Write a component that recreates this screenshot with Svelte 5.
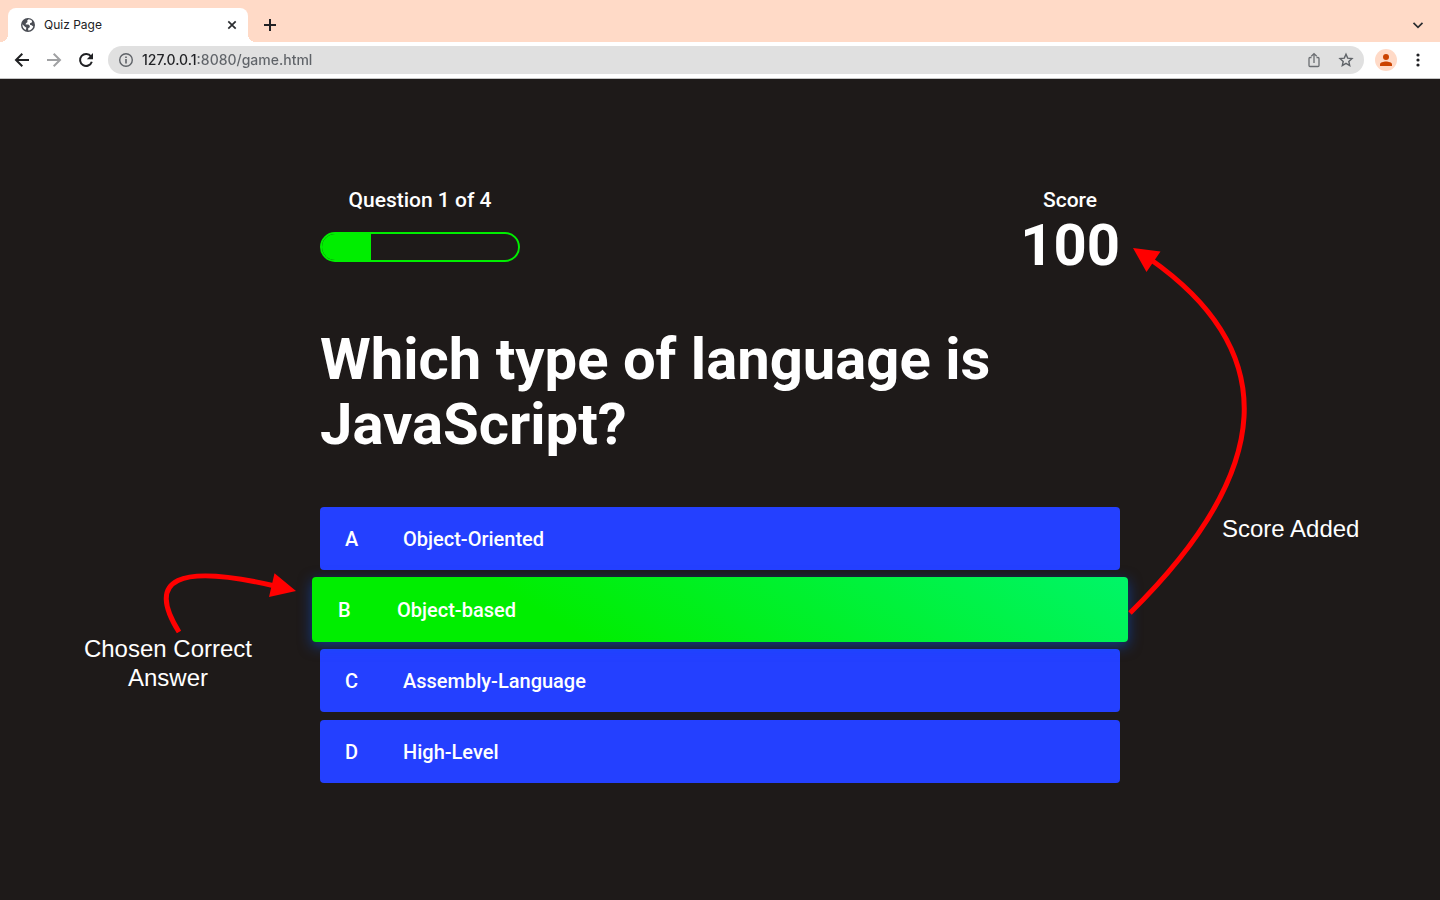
<script>
  const choices = [
    { letter: 'A', text: 'Object-Oriented' },
    { letter: 'B', text: 'Object-based' },
    { letter: 'C', text: 'Assembly-Language' },
    { letter: 'D', text: 'High-Level' }
  ];
  const question = 1;
  const total = 4;
  let chosen = $state('B');
  let address = $state('127.0.0.1:8080/game.html');
</script>

<div class="window">
  <header>
    <div class="tabs">
      <div class="tab">
        <svg class="globe" width="16" height="16" viewBox="0 0 16 16" aria-hidden="true">
          <circle cx="8" cy="8" r="7" fill="#4b4e55" />
          <path d="M8.600 2.200 7.200 3.600 7.500 5 5.800 6.400 5.600 7.400H8.400L9.800 8.800V10.200L8.200 11.200V13.600C10.800 13.400 12.700 11.600 13.300 9.400L11.600 8.200 10 7.800V6.200L11.800 5.500 12.100 4C11.200 3 10 2.300 8.600 2.200ZM2.400 7.200C2.200 9.600 3.600 12 5.700 13L6.400 10.800 5 9.800Z" fill="#fff" />
        </svg>
        <span class="title">Quiz Page</span>
        <button class="icon" aria-label="Close tab">
          <svg width="16" height="16" viewBox="0 0 16 16"><path d="M4.300 4.300 11.700 11.700M11.700 4.300 4.300 11.700" stroke="#2b2d30" stroke-width="1.700" /></svg>
        </button>
      </div>
      <button class="icon add" aria-label="New tab">
        <svg width="16" height="16" viewBox="0 0 16 16"><path d="M8 2V14M2 8H14" stroke="#202124" stroke-width="2" /></svg>
      </button>
      <button class="icon search" aria-label="Search tabs">
        <svg width="16" height="16" viewBox="0 0 16 16"><path d="M3.500 5.800 8 10.300 12.500 5.800" fill="none" stroke="#2b2d30" stroke-width="1.700" /></svg>
      </button>
    </div>
    <nav class="toolbar" aria-label="Browser">
      <button class="icon" aria-label="Back">
        <svg width="16" height="16" viewBox="0 0 16 16"><path d="M15 8H2.500M8.300 1.700 2 8 8.300 14.300" fill="none" stroke="#202124" stroke-width="2" /></svg>
      </button>
      <button class="icon" aria-label="Forward">
        <svg width="16" height="16" viewBox="0 0 16 16"><path d="M1 8H13.500M7.700 1.700 14 8 7.700 14.300" fill="none" stroke="#a0a1a3" stroke-width="2" /></svg>
      </button>
      <button class="icon" aria-label="Reload">
        <svg width="16" height="16" viewBox="0 0 16 16"><path d="M13 4.500A6 6 0 1 0 13.800 9.700" fill="none" stroke="#202124" stroke-width="2" /><path d="M15 1V7.200H8.800Z" fill="#202124" /></svg>
      </button>
      <div class="address">
        <svg width="16" height="16" viewBox="0 0 16 16" aria-hidden="true"><circle cx="8" cy="8" r="6.300" fill="none" stroke="#5f6368" stroke-width="1.400" /><path d="M8 7V11.500M8 4.400V6" stroke="#5f6368" stroke-width="1.600" /></svg>
        <input type="text" aria-label="Address" bind:value={address} />
        <button class="icon" aria-label="Share">
          <svg width="16" height="16" viewBox="0 0 16 16"><path d="M5.500 5.500H4Q3 5.500 3 6.500V13.500Q3 14.500 4 14.500H12Q13 14.500 13 13.500V6.500Q13 5.500 12 5.500H10.500M8 11V2M5.300 4.300 8 1.600 10.700 4.300" fill="none" stroke="#6b6e72" stroke-width="1.300" /></svg>
        </button>
        <button class="icon" aria-label="Bookmark">
          <svg width="16" height="16" viewBox="0 0 16 16"><path d="M8 2.200 9.700 6.100 14 6.500 10.800 9.400 11.700 13.600 8 11.400 4.300 13.600 5.200 9.400 2 6.500 6.300 6.100Z" fill="none" stroke="#5f6368" stroke-width="1.400" /></svg>
        </button>
      </div>
      <button class="profile" aria-label="Profile">
        <svg width="22" height="22" viewBox="0 0 22 22"><circle cx="11" cy="8" r="3" fill="#cb4300" /><path d="M5 17V15.200C5 13.300 8.500 12.400 11 12.400S17 13.300 17 15.200V17Z" fill="#cb4300" /></svg>
      </button>
      <button class="icon" aria-label="Menu">
        <svg width="16" height="16" viewBox="0 0 16 16" fill="#202124"><circle cx="8" cy="3" r="1.600" /><circle cx="8" cy="8" r="1.600" /><circle cx="8" cy="13" r="1.600" /></svg>
      </button>
    </nav>
  </header>

  <main>
    <div class="quiz">
      <div class="hud">
        <div class="item">
          <p>Question {question} of {total}</p>
          <div class="progress" role="progressbar" aria-label="Progress" aria-valuemin="0" aria-valuemax={total} aria-valuenow={question}>
            <div class="fill" style:width="{(question / total) * 100}%"></div>
          </div>
        </div>
        <div class="item">
          <p>Score</p>
          <strong>100</strong>
        </div>
      </div>
      <h1>Which type of language is JavaScript?</h1>
      <div class="choices">
        {#each choices as choice}
          <button class="choice" class:correct={chosen === choice.letter} onclick={() => (chosen = choice.letter)}>
            <span>{choice.letter}</span>
            <span>{choice.text}</span>
          </button>
        {/each}
      </div>

      <svg class="arrows" width="1440" height="603" viewBox="0 188 1440 603" aria-hidden="true">
        <g fill="none" stroke="#f00" stroke-width="5">
          <path d="M179 632Q129 552 275 586" />
          <path d="M1130 613Q1348 398 1150 259" />
        </g>
        <path d="M296 591 274.500 573.300 269 597ZM1133 248 1160.500 251.500 1146.500 272Z" fill="#f00" />
      </svg>
      <p class="note chosen">Chosen Correct<br />Answer</p>
      <p class="note added">Score Added</p>
    </div>
  </main>
</div>

<style>
  :global(body) {
    margin: 0;
    background: #1e1a19;
  }
  .window {
    min-height: 100vh;
    display: flex;
    flex-direction: column;
    overflow: hidden;
    font-family: Roboto, "Liberation Sans", sans-serif;
  }
  p,
  h1 {
    margin: 0;
  }
  button {
    border: 0;
    padding: 0;
    font: inherit;
    cursor: pointer;
  }
  svg {
    display: block;
  }
  .icon {
    display: flex;
    background: none;
  }
  .tabs {
    display: flex;
    align-items: center;
    height: 42px;
    padding: 0 14px 0 8px;
    background: #ffdac7;
  }
  .tab {
    position: relative;
    box-sizing: border-box;
    display: flex;
    align-items: center;
    gap: 8px;
    align-self: flex-end;
    width: 240px;
    height: 34px;
    padding: 0 8px 0 12px;
    border-radius: 8px 8px 0 0;
    background: #fff;
  }
  .tab::before,
  .tab::after {
    content: "";
    position: absolute;
    bottom: 0;
    width: 8px;
    height: 8px;
  }
  .tab::before {
    right: 100%;
    background: radial-gradient(circle at 0 0, transparent 8px, #fff 8px);
  }
  .tab::after {
    left: 100%;
    background: radial-gradient(circle at 100% 0, transparent 8px, #fff 8px);
  }
  .title {
    flex: 1;
    font: 12px/16px Inter, sans-serif;
    color: #202124;
  }
  .add {
    margin: 8px 0 0 14px;
  }
  .search {
    margin: 8px 0 0 auto;
  }
  .toolbar {
    display: flex;
    align-items: center;
    gap: 16px;
    height: 36px;
    padding: 0 14px;
    background: #fff;
    border-bottom: 1px solid #c4c4c4;
  }
  .address {
    flex: 1;
    display: flex;
    align-items: center;
    gap: 16px;
    height: 28px;
    margin: 0 -4px 0 -2px;
    padding: 0 10px;
    border-radius: 14px;
    background: #e0e0e0;
  }
  input {
    flex: 1;
    min-width: 0;
    margin-left: -8px;
    padding: 0;
    border: 0;
    outline: 0;
    font: 500 14px/20px Inter, sans-serif;
    color: transparent;
    caret-color: #202124;
    background: linear-gradient(to right, #202124 55px, #5f6368 55px);
    -webkit-background-clip: text;
    background-clip: text;
  }
  .profile {
    width: 22px;
    height: 22px;
    margin: 0 -3px 0 -1px;
    border-radius: 50%;
    background: #ffdac7;
  }
  main {
    flex: 1;
    display: flex;
    align-items: center;
    justify-content: center;
    color: #fff;
  }
  .quiz {
    position: relative;
    width: 800px;
    max-width: 100%;
    padding-bottom: 8px;
  }
  .hud {
    display: flex;
    justify-content: space-between;
  }
  .item {
    text-align: center;
    font-size: 21px;
    font-weight: 500;
    line-height: 24px;
  }
  strong {
    display: block;
    font-size: 58px;
    font-weight: 700;
    line-height: 66px;
  }
  .progress {
    box-sizing: border-box;
    width: 200px;
    height: 30px;
    margin-top: 20px;
    border: 2px solid #00ee00;
    border-radius: 15px;
    overflow: hidden;
  }
  .fill {
    height: 100%;
    background: #00ee00;
  }
  h1 {
    margin: 49px 0 50px;
    font-size: 58px;
    font-weight: 700;
    line-height: 65px;
  }
  .choices {
    display: flex;
    flex-direction: column;
    gap: 8px;
  }
  .choice {
    display: grid;
    grid-template-columns: 58px 1fr;
    align-items: center;
    height: 63px;
    padding: 0 25px;
    border-radius: 4px;
    background: #2440ff;
    color: #fff;
    font-size: 20px;
    font-weight: 500;
    text-align: left;
  }
  .correct {
    z-index: 1;
    grid-template-columns: 59px 1fr;
    height: 65px;
    margin: -1px -8px;
    padding: 0 26px;
    background: linear-gradient(32deg, #00ee00 30%, #00f568 100%);
    box-shadow: 0 4px 14px rgba(6, 90, 247, 0.5);
  }
  .arrows {
    position: absolute;
    z-index: 2;
    top: 0;
    left: -320px;
    pointer-events: none;
  }
  .note {
    position: absolute;
    font: 24px/29px "Liberation Sans", sans-serif;
    text-align: center;
    white-space: nowrap;
  }
  .chosen {
    top: 446px;
    right: calc(100% + 68px);
  }
  .added {
    top: 326px;
    left: calc(100% + 102px);
  }
</style>
